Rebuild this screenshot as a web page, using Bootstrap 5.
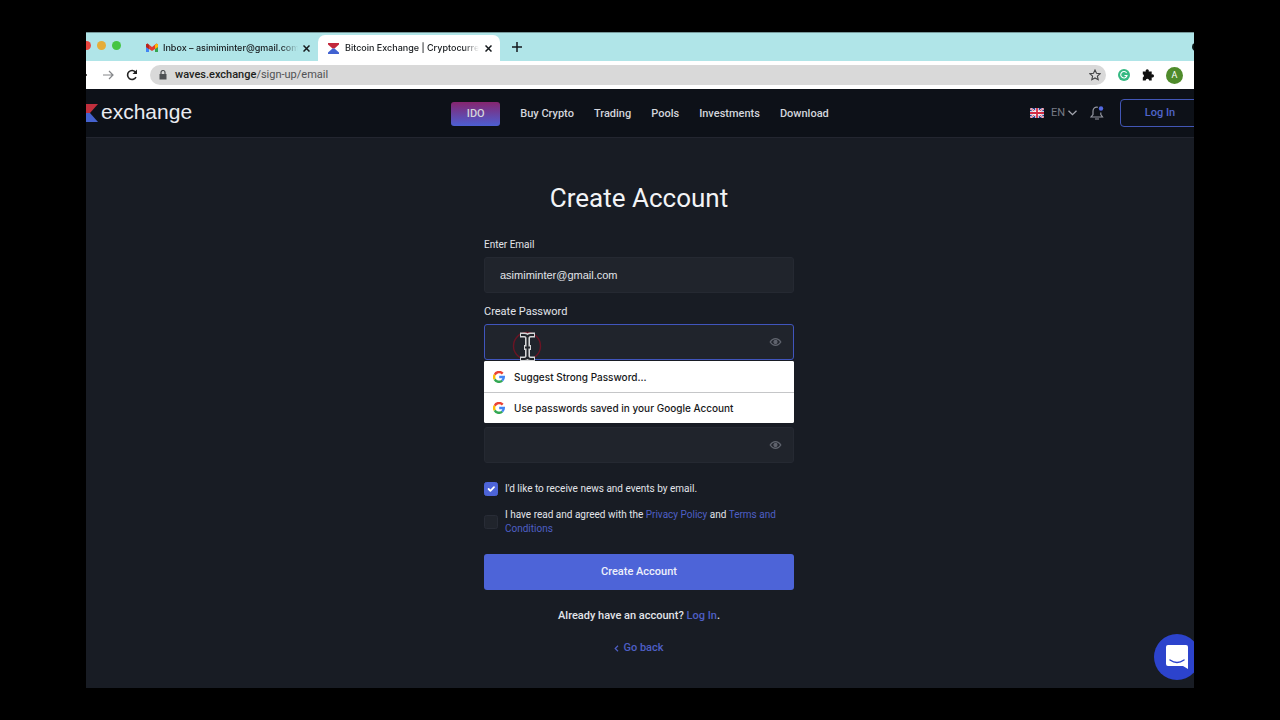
<!DOCTYPE html>
<html lang="en">
<head>
<meta charset="utf-8">
<meta name="viewport" content="width=device-width, initial-scale=1">
<title>Bitcoin Exchange | Create Account</title>
<link href="https://cdn.jsdelivr.net/npm/bootstrap@5.3.0/dist/css/bootstrap.min.css" rel="stylesheet">
<style>
:root { --accent: #4d64d8; --link: #4e5fc4; --field: #20242c; --ink: #e2e4ea; }
body { background: #000; color: var(--ink); font-family: Roboto, sans-serif; font-size: 11px; line-height: 16px; padding: 32px 86px; }
svg { display: block; flex: none; }
a { color: var(--link); text-decoration: none; }
.frame { min-height: calc(100vh - 64px); background: #181c24; overflow: hidden; }
.tabstrip { background: #b0e5e8; height: 29px; font-family: Inter, sans-serif; font-size: 9px; font-weight: 500; color: #15191c; border-top: 1px solid #77999b; }
.dot { width: 9px; height: 9px; border-radius: 50%; }
.dots { margin-left: -4px; gap: 6px; width: 54px; padding-bottom: 4px; }
.tab { width: 182px; height: 26px; padding: 0 8px 0 10px; gap: 6px; }
.tab-mail { gap: 5px; }
.tab-open { background: #fff; border-radius: 7px 7px 0 0; }
.tab-title { flex: 1 1 0; min-width: 0; white-space: nowrap; -webkit-mask-image: linear-gradient(90deg, #000 88%, transparent); mask-image: linear-gradient(90deg, #000 88%, transparent); }
.icon-btn { border: 0; background: none; padding: 0; color: inherit; }
.toolbar { background: #fff; height: 28px; color: #222; gap: 12px; padding-right: 11px; }
.back { margin-left: -10px; }
.address { background: #d9d9d9; height: 20px; border-radius: 10px; padding: 0 5px 0 8px; gap: 7px; }
.url { font-size: 11px; color: #505154; }
.url b { font-weight: 500; color: #1d1e20; }
.avatar { width: 17px; height: 17px; border-radius: 50%; background: #4f8b2b; color: #fff; font-size: 9px; line-height: 17px; }
.site-nav { display: grid; grid-template-columns: 1fr auto 1fr; height: 49px; background: #0d1118; border-bottom: 1px solid #232630; }
.brand-word { font: 21px/24px "Liberation Sans", sans-serif; color: #e9ebf0; padding-bottom: 2px; }
.logo { margin-left: -8px; gap: 3px; }
.menu { gap: 20px; font-weight: 500; padding-top: 1px; }
.menu a { color: #d3d5dc; }
.menu .ido { width: 49px; height: 24px; line-height: 24px; border-radius: 3px; background: linear-gradient(#86256f, #4c5fd3); }
.lang { color: #777b85; gap: 3px; margin-right: 13px; }
.login { width: 80px; height: 28px; margin-right: -6px; border: 1px solid #4256b5; border-radius: 4px; background: none; color: #5064c9; font-weight: 500; }
main { padding: 45px 2px 24px 0; }
.signup { width: 310px; }
h1 { font-size: 26px; line-height: 30px; font-weight: 400; color: #f2f3f6; }
.signup label { display: block; }
.label-sm { font-size: 10px; }
.label-md { padding-top: 11px; }
.field { height: 36px; font-size: 11px; color: var(--ink); background: var(--field); border: 1px solid #252932; border-radius: 3px; padding: 0 36px 0 15px; }
.field:focus { color: var(--ink); background: var(--field); box-shadow: none; border-color: #4055bd; }
.field.active { border-color: #4055bd; }
.mail { font-family: "Liberation Sans", sans-serif; }
.eye { position: absolute; right: 12px; top: 12px; color: #60646e; }
.suggest { position: absolute; top: 37px; left: 0; right: 0; background: #fff; border-radius: 2px; overflow: hidden; }
.suggest button { height: 31px; width: 100%; padding: 0 9px; gap: 9px; border: 0; background: #fff; color: #17181a; font: 500 10px/16px Inter, sans-serif; }
.suggest button + button { border-top: 1px solid #c5c6c8; }
.pointer { position: absolute; left: 28px; top: 6px; }
.repeat { margin-top: 67px; }
.tick { width: 14px; height: 14px; margin: 0; flex: none; background-color: var(--field); border: 1px solid #282c36; border-radius: 3px; }
.tick:checked { background-color: var(--accent); border-color: var(--accent); }
.news-row { margin-top: 19px; }
.tick-row { gap: 7px; font-size: 10px; line-height: 14px; }
.submit { height: 36px; margin-top: 18px; border: 0; border-radius: 3px; background: var(--accent); color: #eef0fb; font-weight: 500; }
.form-links { margin: 18px 0 0; font-weight: 500; }
.form-links + .form-links { margin-top: 16px; }
.chat { position: fixed; left: calc(100vw - 126px); bottom: 40px; width: 40px; height: 46px; overflow: hidden; }
</style>
</head>
<body>
<div class="frame d-flex flex-column">
  <div class="tabstrip d-flex align-items-end">
    <div class="dots d-flex align-self-center">
      <span class="dot" style="background:#e8463f"></span><span class="dot" style="background:#e5ad38"></span><span class="dot" style="background:#45c543"></span>
    </div>
    <div class="tab tab-mail d-flex align-items-center">
      <svg width="12" height="10" viewBox="0 0 12 10"><path d="M0 2v7h3V4z" fill="#4285f4"/><path d="M9 4v5h3V2z" fill="#34a853"/><path d="M0 1.500l1.500-1L6 4l4.500-3.500 1.500 1V4L6 8 0 4z" fill="#e23b30"/><path d="M9 2l1.500-1.500L12 1.500V4L9 6z" fill="#fbbc04"/><path d="M0 1.500l1.500-1L3 2v4L0 4z" fill="#b5261d"/></svg>
      <span class="tab-title">Inbox – asimiminter@gmail.com</span>
      <button class="icon-btn" aria-label="Close mail tab"><svg width="7" height="7" viewBox="0 0 7 7" stroke="currentColor" stroke-width="1.500"><path d="M.5.5l6 6m0-6l-6 6"/></svg></button>
    </div>
    <div class="tab tab-open d-flex align-items-center">
      <svg width="11" height="11" viewBox="0 0 11 11"><path d="M0 0h11v1.500L6.500 5.500h-2L0 1.500z" fill="#c3283c"/><path d="M0 11h11V9.500L6.500 5.500h-2L0 9.500z" fill="#4162d1"/></svg>
      <span class="tab-title">Bitcoin Exchange | Cryptocurre</span>
      <button class="icon-btn" aria-label="Close exchange tab"><svg width="7" height="7" viewBox="0 0 7 7" stroke="currentColor" stroke-width="1.500"><path d="M.5.5l6 6m0-6l-6 6"/></svg></button>
    </div>
    <button class="icon-btn align-self-center ms-2 ps-1" aria-label="New tab"><svg width="10" height="10" viewBox="0 0 10 10" stroke="currentColor" stroke-width="1.500"><path d="M5 0v10M0 5h10"/></svg></button>
    <svg class="ms-auto align-self-center" width="2" height="8" viewBox="0 0 2 8"><circle cx="4" cy="4" r="4" fill="#0b1516"/></svg>
  </div>

  <div class="toolbar d-flex align-items-center">
    <button class="icon-btn back" aria-label="Back"><svg width="11" height="10" viewBox="0 0 11 10" fill="none" stroke="currentColor" stroke-width="1.300"><path d="M11 5H1m4-4L1 5l4 4"/></svg></button>
    <button class="icon-btn ms-1" aria-label="Forward"><svg width="11" height="10" viewBox="0 0 11 10" fill="none" stroke="#85878a" stroke-width="1.200"><path d="M0 5h10M6 1l4 4-4 4"/></svg></button>
    <button class="icon-btn" aria-label="Reload"><svg width="12" height="12" viewBox="0 0 12 12" fill="none" stroke="currentColor" stroke-width="1.600"><path d="M10 8.200A4.500 4.500 0 1 1 9.700 3.300"/><path d="M11 .5v4.500H6.500z" fill="currentColor" stroke="none"/></svg></button>
    <div class="address d-flex align-items-center flex-grow-1">
      <svg width="10" height="10" viewBox="0 0 10 10"><path d="M1.500 4h7v5.500h-7z" fill="#4e5053"/><path d="M3 4V2.500a2 2 0 0 1 4 0V4" fill="none" stroke="#4e5053" stroke-width="1.200"/></svg>
      <span class="url flex-grow-1"><b>waves.exchange</b>/sign-up/email</span>
      <button class="icon-btn" aria-label="Bookmark"><svg width="12" height="12" viewBox="0 0 12 12" fill="none" stroke="#424345" stroke-width="1.100"><path d="M6 1l1.500 3.300 3.600.4-2.700 2.400.8 3.600L6 8.900l-3.200 1.800.8-3.600L.9 4.700l3.600-.4z"/></svg></button>
    </div>
    <svg width="12" height="12" viewBox="0 0 12 12"><circle cx="6" cy="6" r="6" fill="#35b982"/><path d="M8.600 4A3.200 3.200 0 1 0 9 6.500H6.500" fill="none" stroke="#fff" stroke-width="1.100"/></svg>
    <svg width="12" height="12" viewBox="0 0 12 12" fill="#111"><path d="M.8 2.500h3a1.600 1.600 0 1 1 2.900 0h3v3a1.600 1.600 0 1 1 0 2.900v3.100H7.100a1.700 1.700 0 0 0-3.400 0H.8V8.400a1.700 1.700 0 0 0 0-3.200z"/></svg>
    <span class="avatar text-center">A</span>
  </div>

  <nav class="site-nav align-items-center" aria-label="Main">
    <a href="#" class="logo d-flex align-items-center">
      <svg width="20" height="18" viewBox="0 0 20 18"><path d="M0 0h20l-8 9H8z" fill="#c02f3d"/><path d="M0 18h20l-8-9H8z" fill="#4562cf"/></svg>
      <span class="brand-word">exchange</span>
    </a>
    <div class="menu d-flex align-items-center">
      <a class="ido text-center" href="#">IDO</a><a href="#">Buy Crypto</a><a href="#">Trading</a><a href="#">Pools</a><a href="#">Investments</a><a href="#">Download</a>
    </div>
    <div class="d-flex align-items-center justify-content-end">
      <button class="icon-btn lang d-flex align-items-center">
        <svg class="me-1" width="14" height="10" viewBox="0 0 14 10"><path d="M0 0h14v10H0z" fill="#26398b"/><path d="M0 0l14 10M14 0L0 10" stroke="#fff" stroke-width="2"/><path d="M0 0l14 10M14 0L0 10" stroke="#d22c45" stroke-width=".8"/><path d="M7 0v10M0 5h14" stroke="#fff" stroke-width="3.400"/><path d="M7 0v10M0 5h14" stroke="#d22c45" stroke-width="1.800"/></svg>
        EN
        <svg width="9" height="6" viewBox="0 0 9 6" fill="none" stroke="#a3a6ae" stroke-width="1.300"><path d="M.5.7l4 4 4-4"/></svg>
      </button>
      <button class="icon-btn me-3" aria-label="Notifications"><svg width="14" height="14" viewBox="0 0 14 14" fill="none" stroke="#9598a2" stroke-width="1.200"><path d="M8 1.300C5 .3 3 2.500 3 5v3.500L1 11h11.500l-1.700-2.500V6.500M5 13h4"/><circle cx="11" cy="2.500" r="2.200" fill="#5369e0" stroke="none"/></svg></button>
      <button class="login">Log In</button>
    </div>
  </nav>

  <main class="flex-grow-1">
    <form class="signup mx-auto">
      <h1 class="text-center mb-0">Create Account</h1>
      <label class="label-sm mt-4 pb-1" for="email">Enter Email</label>
      <input class="form-control field mail" id="email" type="email" value="asimiminter@gmail.com">
      <label class="label-md pb-1" for="pass">Create Password</label>
      <div class="position-relative">
        <input class="form-control field active" id="pass" type="password">
        <svg class="eye" width="13" height="12" viewBox="0 0 13 12" fill="none" stroke="currentColor" stroke-width="1.300"><path d="M1.200 6c2.800-4.500 7.800-4.500 10.600 0-2.800 4.500-7.800 4.500-10.600 0z"/><circle cx="6.500" cy="6" r="1.500" fill="currentColor"/></svg>
        <svg class="pointer" width="32" height="31" viewBox="0 0 32 31" fill="none"><circle cx="15" cy="16" r="13.500" stroke="#6b1424" stroke-width="1.400"/><path d="M8 5h4.500q2.500 0 3 2.500.5-2.500 3-2.500H23M8 29h4.500q2.500 0 3-2.500.5 2.500 3 2.500H23M15.500 6v22M12 17.500h7" stroke="#d4d5d7" stroke-width="5"/><path d="M9 5h3.500q2.500 0 3 2.500.5-2.500 3-2.500H22M9 29h3.500q2.500 0 3-2.500.5 2.500 3 2.500H22M15.500 6v22M13 17.500h5" stroke="#22252b" stroke-width="1.900"/></svg>
        <div class="suggest">
          <button type="button" class="d-flex align-items-center"><svg width="12" height="12" viewBox="0 0 12 12" fill="none" stroke-width="2.400"><path d="M9.700 2.600A4.900 4.900 0 0 0 1.700 3.700" stroke="#ea4335"/><path d="M1.700 3.700a4.900 4.900 0 0 0 0 4.600" stroke="#fbbc05"/><path d="M1.700 8.300a4.900 4.900 0 0 0 7.500 1.300" stroke="#34a853"/><path d="M9.200 9.600A4.900 4.900 0 0 0 10.800 6H6.200" stroke="#4285f4"/></svg>Suggest Strong Password...</button>
          <button type="button" class="d-flex align-items-center"><svg width="12" height="12" viewBox="0 0 12 12" fill="none" stroke-width="2.400"><path d="M9.700 2.600A4.900 4.900 0 0 0 1.700 3.700" stroke="#ea4335"/><path d="M1.700 3.700a4.900 4.900 0 0 0 0 4.600" stroke="#fbbc05"/><path d="M1.700 8.300a4.900 4.900 0 0 0 7.500 1.300" stroke="#34a853"/><path d="M9.200 9.600A4.900 4.900 0 0 0 10.800 6H6.200" stroke="#4285f4"/></svg>Use passwords saved in your Google Account</button>
        </div>
      </div>
      <div class="repeat position-relative">
        <input class="form-control field" type="password" aria-label="Confirm password">
        <svg class="eye" width="13" height="12" viewBox="0 0 13 12" fill="none" stroke="currentColor" stroke-width="1.300"><path d="M1.200 6c2.800-4.500 7.800-4.500 10.600 0-2.800 4.500-7.800 4.500-10.600 0z"/><circle cx="6.500" cy="6" r="1.500" fill="currentColor"/></svg>
      </div>
      <div class="tick-row news-row d-flex align-items-center">
        <input class="form-check-input tick" type="checkbox" id="news" checked><label for="news">I'd like to receive news and events by email.</label>
      </div>
      <div class="tick-row d-flex align-items-center mt-2 pt-1">
        <input class="form-check-input tick" type="checkbox" id="terms"><label for="terms">I have read and agreed with the <a href="#">Privacy Policy</a> and <a href="#">Terms and Conditions</a></label>
      </div>
      <button class="submit w-100 d-block" type="button">Create Account</button>
      <p class="form-links text-center">Already have an account? <a href="#">Log In</a>.</p>
      <p class="form-links text-center"><a href="#" class="d-inline-flex align-items-center gap-1"><svg width="5" height="7" viewBox="0 0 5 7" fill="none" stroke="currentColor" stroke-width="1.200"><path d="M4 .8L1.200 3.500 4 6.200"/></svg>Go back</a></p>
    </form>
  </main>
</div>
<button class="icon-btn chat" aria-label="Open chat"><svg width="46" height="46" viewBox="0 0 46 46"><circle cx="23" cy="23" r="23" fill="#2c43cc"/><path d="M14 11h18q2 0 2 2v22l-5-3H14q-2 0-2-2V13q0-2 2-2z" fill="#fff"/><path d="M16 26q7 5 14 0" fill="none" stroke="#2c43cc" stroke-width="1.500" stroke-linecap="round"/></svg></button>
<script src="https://cdn.jsdelivr.net/npm/bootstrap@5.3.0/dist/js/bootstrap.bundle.min.js"></script>
</body>
</html>
